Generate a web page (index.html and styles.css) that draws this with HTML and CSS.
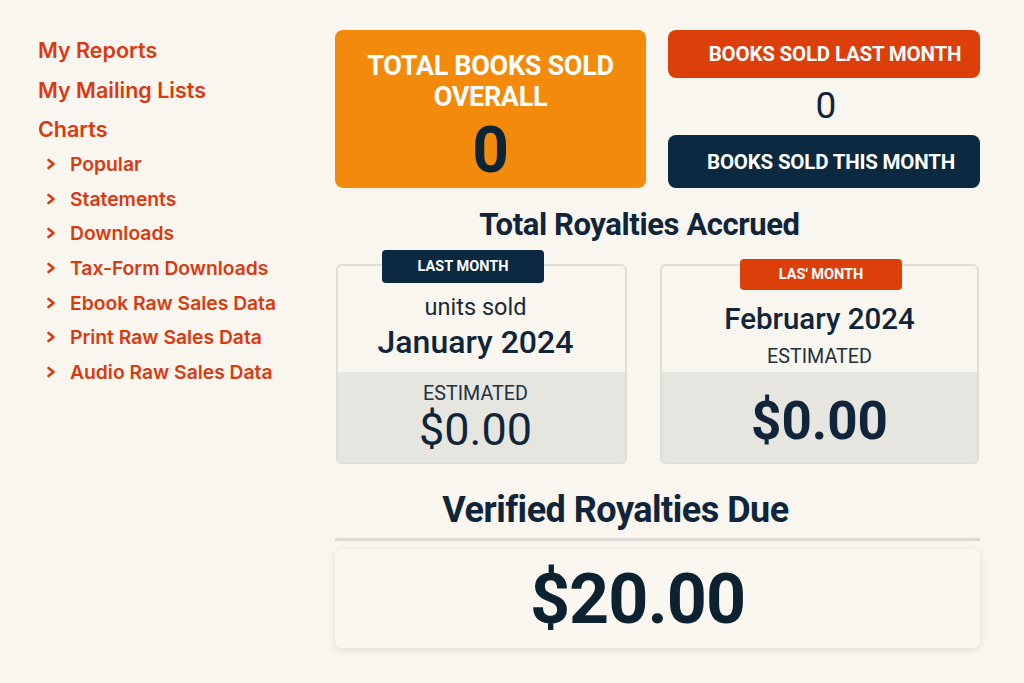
FILE: index.html
```html
<!DOCTYPE html>
<html lang="en">
<head>
<meta charset="utf-8">
<title>Dashboard</title>
<link rel="stylesheet" href="styles.css">
</head>
<body>
<div class="page">
  <nav class="sidebar">
    <a class="top-link">My Reports</a>
    <a class="top-link">My Mailing Lists</a>
    <a class="top-link">Charts</a>
    <ul class="sub-list">
      <li><svg class="chev" viewBox="0 0 10 12"><polyline points="2.5,2 7.5,6 2.5,10"/></svg><span>Popular</span></li>
      <li><svg class="chev" viewBox="0 0 10 12"><polyline points="2.5,2 7.5,6 2.5,10"/></svg><span>Statements</span></li>
      <li><svg class="chev" viewBox="0 0 10 12"><polyline points="2.5,2 7.5,6 2.5,10"/></svg><span>Downloads</span></li>
      <li><svg class="chev" viewBox="0 0 10 12"><polyline points="2.5,2 7.5,6 2.5,10"/></svg><span>Tax-Form Downloads</span></li>
      <li><svg class="chev" viewBox="0 0 10 12"><polyline points="2.5,2 7.5,6 2.5,10"/></svg><span>Ebook Raw Sales Data</span></li>
      <li><svg class="chev" viewBox="0 0 10 12"><polyline points="2.5,2 7.5,6 2.5,10"/></svg><span>Print Raw Sales Data</span></li>
      <li><svg class="chev" viewBox="0 0 10 12"><polyline points="2.5,2 7.5,6 2.5,10"/></svg><span>Audio Raw Sales Data</span></li>
    </ul>
  </nav>

  <main class="main">
    <section class="top-row">
      <div class="total-box">
        <div class="total-label">TOTAL BOOKS SOLD<br>OVERALL</div>
        <div class="total-value">0</div>
      </div>
      <div class="month-col">
        <div class="bar bar-red">BOOKS SOLD LAST MONTH</div>
        <div class="month-value">0</div>
        <div class="bar bar-navy">BOOKS SOLD THIS MONTH</div>
      </div>
    </section>

    <h2 class="heading accrued">Total Royalties Accrued</h2>

    <section class="cards">
      <div class="card card-left">
        <div class="tab tab-navy">LAST MONTH</div>
        <div class="card-top">
          <div class="units">units sold</div>
          <div class="month-name jan">January 2024</div>
        </div>
        <div class="card-bottom">
          <div class="est">ESTIMATED</div>
          <div class="amount">$0.00</div>
        </div>
      </div>
      <div class="card card-right">
        <div class="tab tab-red">LAS' MONTH</div>
        <div class="card-top">
          <div class="month-name feb">February 2024</div>
          <div class="est est-right">ESTIMATED</div>
        </div>
        <div class="card-bottom">
          <div class="amount amount-bold">$0.00</div>
        </div>
      </div>
    </section>

    <h2 class="heading verified">Verified Royalties Due</h2>
    <div class="divider"></div>
    <div class="due-box">$20.00</div>
  </main>
</div>
</body>
</html>
```

FILE: styles.css
```css
* { box-sizing: border-box; }

html, body {
  margin: 0;
  padding: 0;
  background: #f9f6ef;
}

body {
  font-family: "Inter", "Roboto", "Noto Sans", sans-serif;
  color: #10253a;
  width: 1024px;
  height: 683px;
  overflow: hidden;
}

.page {
  display: flex;
  align-items: flex-start;
}

/* Sidebar */
.sidebar {
  width: 335px;
  padding: 31px 0 0 38px;
  display: flex;
  flex-direction: column;
}

.top-link {
  display: block;
  color: #d93a10;
  font-size: 21.5px;
  font-weight: 600;
  line-height: 39.5px;
}

.sub-list {
  list-style: none;
  margin: -3px 0 0 0;
  padding: 0;
}

.sub-list li {
  display: flex;
  align-items: center;
  height: 34.7px;
  color: #d93a10;
  font-size: 19.3px;
  font-weight: 600;
}

.chev {
  width: 10px;
  height: 12px;
  margin-left: 8px;
  margin-right: 14px;
  fill: none;
  stroke: #d93a10;
  stroke-width: 2.6;
  stroke-linecap: round;
  stroke-linejoin: round;
}

/* Main */
.main {
  width: 645px;
  padding-top: 30px;
  display: flex;
  flex-direction: column;
  font-family: "Roboto", "Inter", sans-serif;
}

.top-row {
  display: grid;
  grid-template-columns: 311px 312px;
  column-gap: 22px;
  height: 158px;
}

.total-box {
  background: #f38a0c;
  border-radius: 8px;
  display: flex;
  flex-direction: column;
  align-items: center;
  padding-top: 21px;
}

.total-label {
  color: #ffffff;
  font-size: 27px;
  font-weight: 700;
  line-height: 31px;
  text-align: center;
  letter-spacing: -0.3px;
}

.total-value {
  color: #0c2536;
  font-size: 64px;
  font-weight: 700;
  line-height: 70px;
  margin-top: 3px;
}

.month-col {
  display: flex;
  flex-direction: column;
}

.bar {
  color: #ffffff;
  font-size: 20.5px;
  font-weight: 700;
  border-radius: 8px;
  display: flex;
  align-items: center;
  justify-content: center;
  padding-left: 22px;
  letter-spacing: -0.2px;
}

.bar-red {
  background: #dc3f0a;
  height: 48px;
}

.bar-navy {
  background: #0b2940;
  height: 53px;
  padding-left: 14px;
}

.month-value {
  height: 57px;
  display: flex;
  align-items: center;
  justify-content: center;
  font-size: 37px;
  font-weight: 400;
  color: #10253a;
  padding-bottom: 2px;
  padding-left: 4px;
}

.heading {
  margin: 0;
  font-weight: 700;
  text-align: center;
  color: #10253a;
}

.accrued {
  font-size: 31px;
  line-height: 40px;
  margin-top: 17px;
  padding-right: 36px;
  letter-spacing: -0.4px;
}

/* Cards */
.cards {
  margin-top: 19px;
  display: flex;
  gap: 33px;
  padding-left: 1px;
}

.card {
  position: relative;
  height: 200px;
  border: 2px solid #dfddd8;
  border-radius: 6px;
  background: #f9f6ef;
  display: flex;
  flex-direction: column;
}

.card-left { width: 291px; }
.card-right { width: 319px; }

.tab {
  position: absolute;
  width: 162px;
  color: #ffffff;
  font-size: 14.5px;
  font-weight: 700;
  border-radius: 4px;
  display: flex;
  align-items: center;
  justify-content: center;
}

.tab-navy {
  background: #0b2940;
  height: 33px;
  top: -16px;
  left: 44px;
}

.tab-red {
  background: #dc3f0a;
  height: 31px;
  top: -7px;
  left: 78px;
}

.card-top {
  height: 106px;
  display: flex;
  flex-direction: column;
  align-items: center;
  border-radius: 6px 6px 0 0;
}

.card-left .card-top { padding: 26px 12px 0 0; }
.card-right .card-top { padding-top: 35px; }

.card-bottom {
  flex: 1;
  background: #e6e5e0;
  display: flex;
  flex-direction: column;
  align-items: center;
  border-radius: 0 0 4px 4px;
}

.card-left .card-bottom { padding: 10px 12px 0 0; }
.card-right .card-bottom { padding-top: 21px; }

.units {
  font-size: 23.5px;
  line-height: 30px;
  color: #1a2a38;
}

.month-name {
  font-weight: 500;
  color: #10253a;
}

.jan {
  font-size: 32px;
  line-height: 38px;
  margin-top: 1px;
}

.feb {
  font-size: 29.5px;
  line-height: 36px;
}

.est {
  font-size: 19.7px;
  line-height: 24px;
  color: #22313e;
}

.est-right { margin-top: 8px; }

.amount {
  font-size: 45px;
  line-height: 48px;
  color: #10253a;
}

.amount-bold {
  font-size: 53px;
  line-height: 56px;
  font-weight: 700;
}

/* Verified */
.verified {
  font-size: 36px;
  line-height: 44px;
  margin-top: 24px;
  padding-right: 84px;
  letter-spacing: -0.5px;
}

.divider {
  margin-top: 6px;
  height: 3px;
  background: #dcdad5;
}

.due-box {
  margin-top: 8px;
  height: 99px;
  border-radius: 7px;
  background: #faf7f0;
  box-shadow: 0 2px 8px rgba(0, 0, 0, 0.10);
  display: flex;
  align-items: center;
  justify-content: center;
  padding-right: 40px;
  font-size: 70px;
  font-weight: 700;
  color: #0c2230;
  letter-spacing: -1px;
}
```
